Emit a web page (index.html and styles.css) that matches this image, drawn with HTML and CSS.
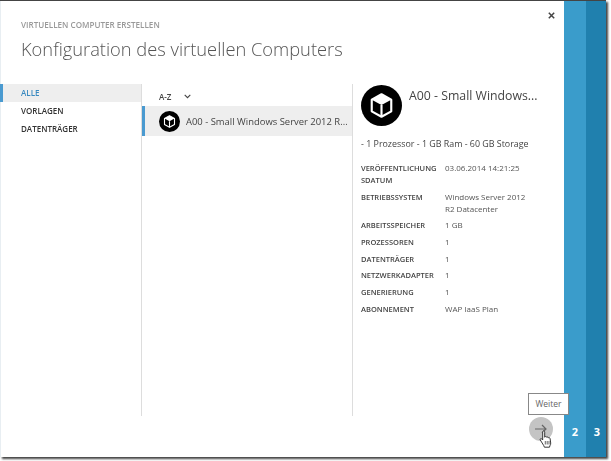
FILE: index.html
```html
<!DOCTYPE html>
<html lang="de">
<head>
<meta charset="utf-8">
<title>Konfiguration des virtuellen Computers</title>
<link rel="stylesheet" href="styles.css">
</head>
<body>
<div class="window">
  <main class="dialog">
    <button class="close" aria-label="Schließen">
      <svg width="7" height="7" viewBox="0 0 7 7"><path d="M.8.8l5.4 5.4M6.2.8L.8 6.2" stroke="#444" stroke-width="1.500" fill="none"/></svg>
    </button>
    <header class="head">
      <div class="eyebrow">VIRTUELLEN COMPUTER ERSTELLEN</div>
      <h1 class="title">Konfiguration des virtuellen Computers</h1>
    </header>
    <div class="panels">
      <nav class="nav">
        <div class="nav-item active">ALLE</div>
        <div class="nav-item">VORLAGEN</div>
        <div class="nav-item">DATENTRÄGER</div>
      </nav>
      <section class="list">
        <div class="sort">A-Z
          <svg class="chev" width="7" height="5" viewBox="0 0 7 5"><path d="M.7.9l2.800 2.800L6.300.9" stroke="#444" stroke-width="1.100" fill="none"/></svg>
        </div>
        <div class="row">
          <svg class="icon-s" viewBox="0 0 42 42"><use href="#cube"/></svg>
          <span class="row-text">A00 - Small Windows Server 2012 R...</span>
        </div>
      </section>
      <section class="detail">
        <div class="detail-head">
          <svg class="icon-l" viewBox="0 0 42 42"><use href="#cube"/></svg>
          <div class="detail-name">A00 - Small Windows...</div>
        </div>
        <p class="summary">- 1 Prozessor - 1 GB Ram - 60 GB Storage</p>
        <dl class="props">
          <dt>VERÖFFENTLICHUNG<br>SDATUM</dt><dd>03.06.2014 14:21:25</dd>
          <dt>BETRIEBSSYSTEM</dt><dd>Windows Server 2012 R2 Datacenter</dd>
          <dt>ARBEITSSPEICHER</dt><dd>1 GB</dd>
          <dt>PROZESSOREN</dt><dd>1</dd>
          <dt>DATENTRÄGER</dt><dd>1</dd>
          <dt>NETZWERKADAPTER</dt><dd>1</dd>
          <dt>GENERIERUNG</dt><dd>1</dd>
          <dt>ABONNEMENT</dt><dd>WAP IaaS Plan</dd>
        </dl>
      </section>
    </div>
    <div class="tooltip">Weiter</div>
    <button class="next" aria-label="Weiter">
      <svg width="12" height="10" viewBox="0 0 12 10"><path d="M0 5h11M7 1l4 4-4 4" stroke="#666" stroke-width="1.200" fill="none"/></svg>
    </button>
    <svg class="cursor" width="14" height="18" viewBox="0 0 14 18"><path d="M4 1.200c.8-.6 1.700 0 1.700 1v5l.6-.5c.7-.4 1.300 0 1.500.6.7-.5 1.400-.2 1.600.5.8-.4 1.600 0 1.700.8l.6 4.400c.1 1-.2 2-.8 2.800l-.4 1.400H5.400l-.7-1.700L1.300 10c-.6-.9.5-1.800 1.400-1.100l1 1V2.200c0-.4.1-.8.3-1z" fill="#fff" stroke="#222" stroke-width=".9"/><path d="M6.300 11v3.500M8.200 11v3.500M10 11v3.500" stroke="#222" stroke-width=".7"/></svg>
  </main>
  <div class="step step-2">2</div>
  <div class="step step-3">3</div>
</div>
<svg class="defs" width="0" height="0" aria-hidden="true">
  <symbol id="cube" viewBox="0 0 42 42">
    <circle cx="21" cy="21" r="21" fill="#000"/>
    <path d="M21 9.500L31 15v12l-10 5.500L11 27V15z" fill="#000" stroke="#fff" stroke-width="2.200" stroke-linejoin="round"/>
    <path d="M21 9.500L31 15l-10 5.500L11 15z" fill="#fff"/>
    <path d="M21 20.500v12" stroke="#fff" stroke-width="2.200" fill="none"/>
  </symbol>
</svg>
</body>
</html>
```
FILE: styles.css
```css
* { box-sizing: border-box; }
html, body { margin: 0; height: 100%; background: #fff; overflow: hidden; }
body { font-family: "Open Sans", "Liberation Sans", sans-serif; color: #333; }
.window {
  display: flex;
  width: 606px;
  height: 457px;
  border-top: 1px solid #444;
  box-shadow: 2px 2px 2px #444;
  filter: blur(.3px);
}
.dialog { position: relative; flex: 1; display: flex; flex-direction: column; min-width: 0; border-left: 1px solid #e8eef2; }
.close { position: absolute; top: 10px; right: 8px; width: 9px; height: 9px; padding: 0; border: 0; background: none; display: flex; align-items: center; justify-content: center; }
.head { padding: 18px 0 0 20px; height: 83px; }
.eyebrow { font-size: 8.100px; line-height: 12px; color: #999; font-weight: 600; }
.title { margin: 5px 0 0; font-size: 18.300px; line-height: 26px; font-weight: 300; color: #555; }
.panels { display: flex; height: 332px; }
.nav { width: 141px; border-right: 1px solid #ddd; }
.nav-item { height: 18px; padding-left: 20px; font-size: 8px; line-height: 18px; font-weight: 600; color: #333; }
.nav-item.active { background: #eee; color: #3a8ac0; border-left: 3px solid #4a9ad0; padding-left: 18px; margin-left: -1px; }
.list { width: 211px; border-right: 1px solid #ddd; }
.sort { height: 22px; padding: 3px 0 0 17px; font-size: 8px; line-height: 14px; font-weight: 600; color: #444; display: flex; align-items: center; }
.chev { margin-left: 13px; }
.row { height: 30px; background: #eee; border-left: 3px solid #4a9ad0; display: flex; align-items: center; padding-left: 14px; gap: 6px; }
.icon-s { width: 21px; height: 21px; flex: none; }
.row-text { font-size: 9.450px; color: #444; white-space: nowrap; }
.detail { width: 211px; padding: 1px 0 0 8px; }
.detail-head { display: flex; gap: 7px; height: 42px; }
.icon-l { width: 41px; height: 41px; flex: none; }
.detail-name { font-size: 12.300px; line-height: 20px; padding-top: 1px; color: #444; white-space: nowrap; }
.summary { margin: 10px 0 0; font-size: 8.900px; line-height: 13px; color: #444; }
.props { margin: 12px 0 0; display: grid; grid-template-columns: 84px 86px; row-gap: 4.700px; font-size: 7.500px; line-height: 12px; }
.props dt { font-weight: 600; color: #444; }
.props dd { margin: 0; color: #555; font-size: 8px; }
.tooltip { position: absolute; left: 527px; top: 392px; width: 41px; height: 22px; border: 1px solid #888; background: #fff; font-size: 8.500px; line-height: 20px; text-align: center; color: #666; z-index: 1; }
.next { position: absolute; left: 528px; top: 416px; width: 24px; height: 24px; padding: 0; border: 0; border-radius: 50%; background: #c4c4c4; display: flex; align-items: center; justify-content: center; }
.cursor { position: absolute; left: 538px; top: 429px; }
.step { display: flex; align-items: flex-end; justify-content: center; padding-bottom: 18px; color: #fff; font-size: 11px; font-weight: 700; line-height: 14px; }
.step-2 { width: 22px; background: #3a9ccb; }
.step-3 { width: 20px; padding-left: 2px; background: #2080ae; }
.defs { position: absolute; }
```
